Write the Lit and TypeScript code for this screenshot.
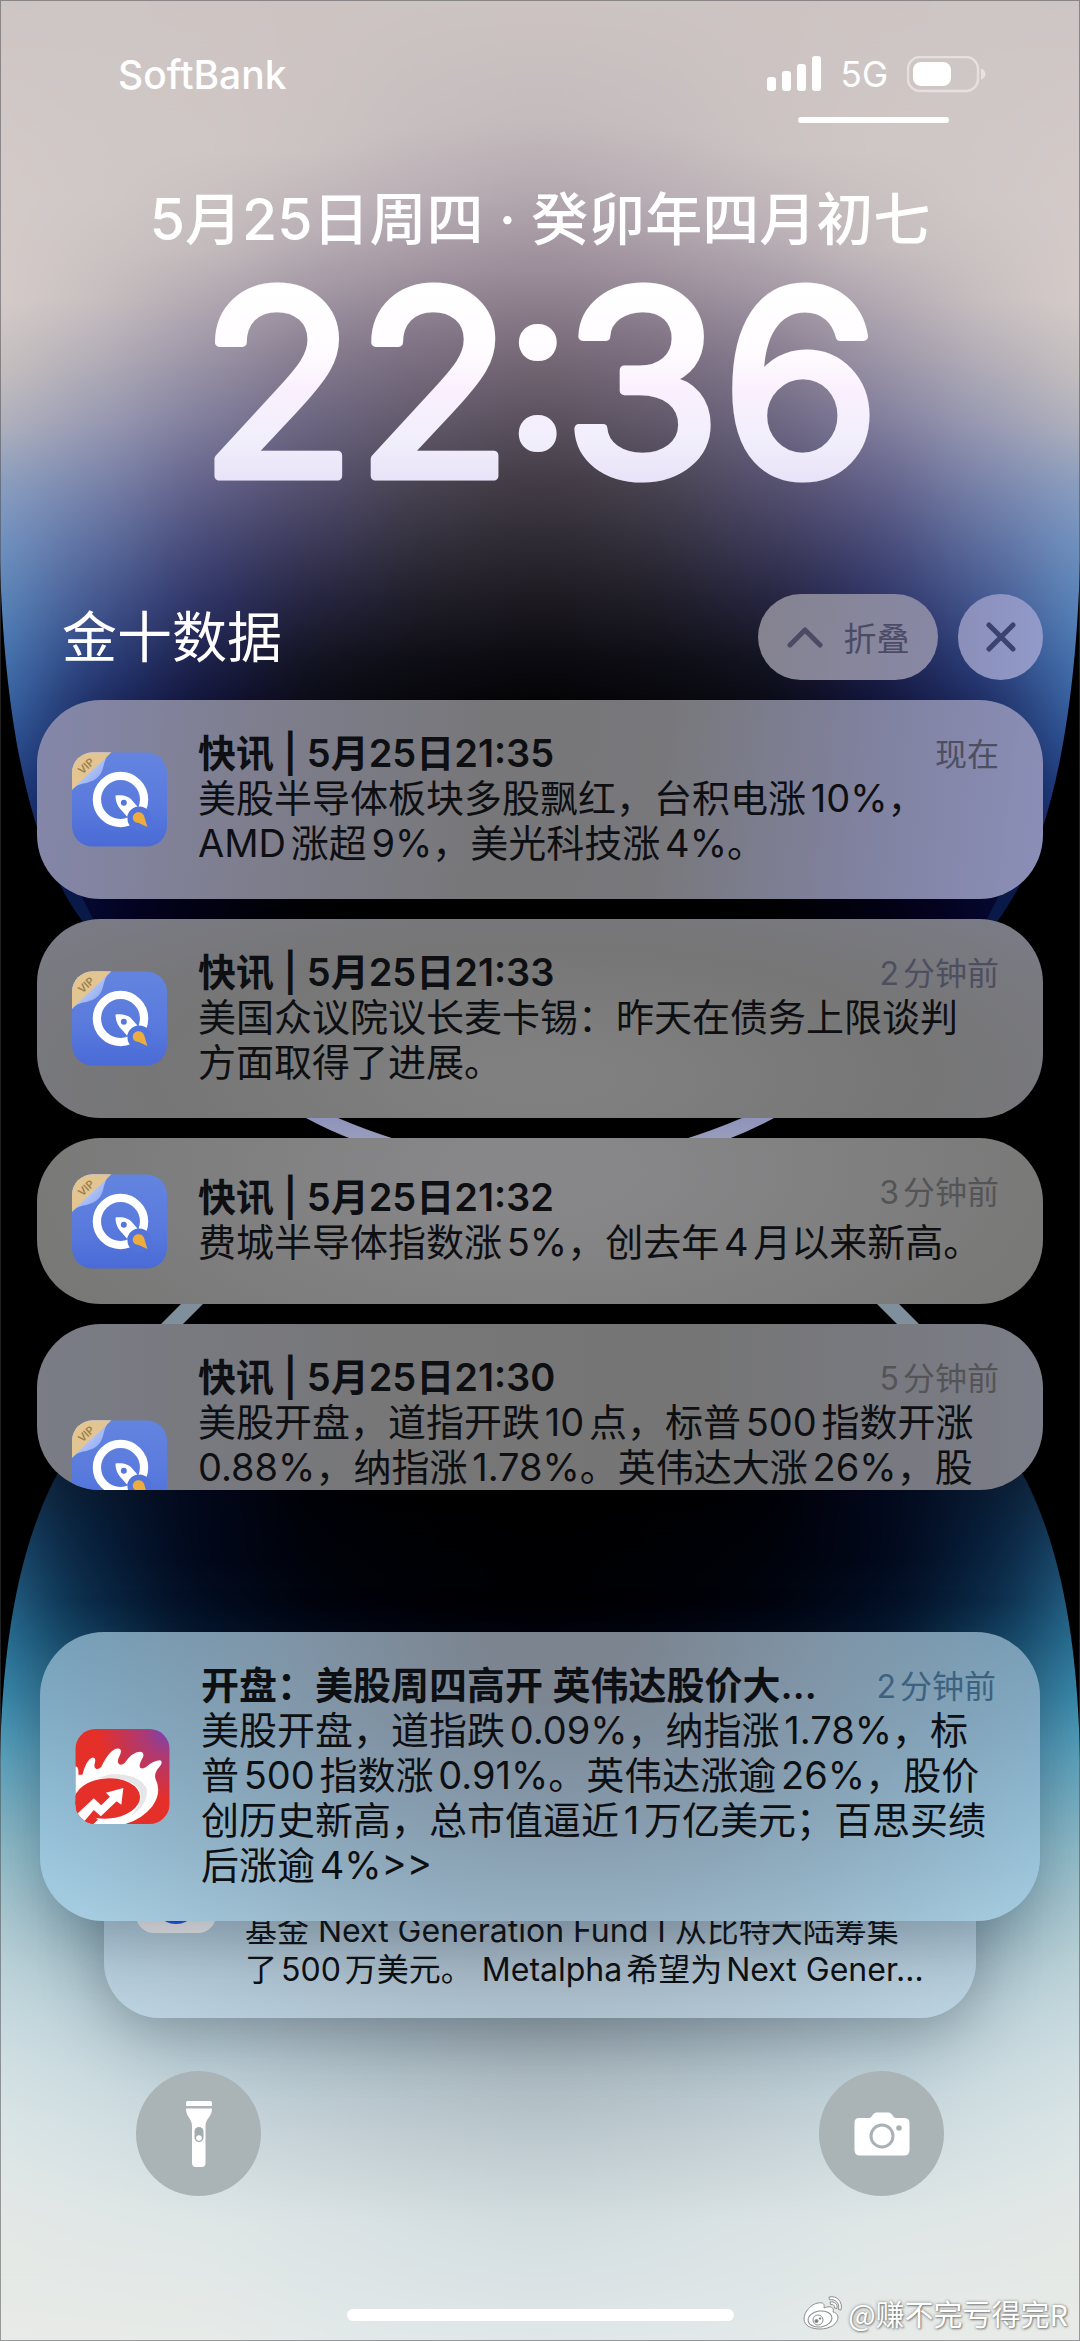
import { LitElement, html, css, svg, nothing } from "lit";
import { customElement, property } from "lit/decorators.js";

interface Notice {
  title: string;
  time: string;
  lines: string[];
  tone: string;
}

const NOTICES: Notice[] = [
  {
    title: "快讯 | 5月25日21:35",
    time: "现在",
    lines: ["美股半导体板块多股飘红，台积电涨10%，", "AMD涨超9%，美光科技涨4%。"],
    tone: "indigo",
  },
  {
    title: "快讯 | 5月25日21:33",
    time: "2分钟前",
    lines: ["美国众议院议长麦卡锡：昨天在债务上限谈判", "方面取得了进展。"],
    tone: "slate",
  },
  {
    title: "快讯 | 5月25日21:32",
    time: "3分钟前",
    lines: ["费城半导体指数涨5%，创去年4月以来新高。"],
    tone: "grey",
  },
  {
    title: "快讯 | 5月25日21:30",
    time: "5分钟前",
    lines: [
      "美股开盘，道指开跌10点，标普500指数开涨",
      "0.88%，纳指涨1.78%。英伟达大涨26%，股",
    ],
    tone: "steel clipped",
  },
];

const HEADLINE: Notice = {
  title: "开盘：美股周四高开 英伟达股价大…",
  time: "2分钟前",
  lines: [
    "美股开盘，道指跌0.09%，纳指涨1.78%，标",
    "普500指数涨0.91%。英伟达涨逾26%，股价",
    "创历史新高，总市值逼近1万亿美元；百思买绩",
    "后涨逾4%>>",
  ],
  tone: "sky",
};

const broken = (lines: string[]) =>
  lines.map((line, i) => html`${i ? html`<br />` : nothing}${line}`);

const rocketIcon = html`
  <svg class="icon" viewBox="33 37 286 284" aria-hidden="true">
    <defs>
      <linearGradient id="rk" x1="0" y1="0" x2="0" y2="1">
        <stop offset="0" stop-color="#6384df" />
        <stop offset=".55" stop-color="#5a7bdd" />
        <stop offset="1" stop-color="#4a6ad6" />
      </linearGradient>
      <linearGradient id="curl" x1="0" y1="0" x2="1" y2="1">
        <stop offset=".4" stop-color="#b9caf8" />
        <stop offset="1" stop-color="#6d90ee" />
      </linearGradient>
      <clipPath id="tile"><rect x="33" y="37" width="286" height="284" rx="62" /></clipPath>
    </defs>
    <g clip-path="url(#tile)">
      <rect x="33" y="37" width="286" height="284" fill="url(#rk)" />
      <path d="M158 30C128 50 132 74 122 96C112 120 84 128 66 131C50 134 40 142 30 154V30Z" fill="url(#curl)" />
      <path d="M152 37L33 149V37Z" fill="#e2c591" />
      <circle cx="179" cy="179" r="71" fill="none" stroke="#fff" stroke-width="25" />
      <circle cx="236" cy="236" r="36" fill="#5273da" />
      <path d="M164 167C184 164 206 169 216 184L230 200C214 203 203 214 199 231L186 216C172 203 164 187 164 167Z" fill="#fff" />
      <circle cx="189" cy="189" r="9" fill="#5676db" />
      <path d="M216 234C216 214 247 210 251 232L260 262L234 250C223 249 216 243 216 234Z" fill="#edad3e" />
      <text x="76" y="89" transform="rotate(-43 76 79)" text-anchor="middle" class="vip">VIP</text>
    </g>
  </svg>
`;

const eyeIcon = html`
  <svg class="icon" viewBox="45 57 281 283" aria-hidden="true">
    <defs>
      <radialGradient id="sn" cx="1" cy="0" r=".75">
        <stop offset="0" stop-color="#7245b8" />
        <stop offset=".35" stop-color="#a93a78" />
        <stop offset="1" stop-color="#e52f29" />
      </radialGradient>
      <clipPath id="tile2"><rect x="45" y="57" width="281" height="283" rx="60" /></clipPath>
    </defs>
    <g clip-path="url(#tile2)">
      <rect x="45" y="57" width="281" height="283" fill="url(#sn)" />
      <path
        d="M45 168Q56 168 54 193H66Q78 148 96 142Q108 143 103 158Q99 174 108 176Q114 178 122 170Q148 116 172 115Q185 116 179 132Q166 155 176 162Q183 166 192 158Q214 126 238 125Q252 127 246 142Q232 167 239 173Q246 177 256 170Q278 150 298 150Q307 155 297 168Q278 188 284 206Q304 246 274 288Q240 330 186 342H96L112 327L45 270Z"
        fill="#fff"
      />
      <path d="M150 192Q236 188 258 236Q262 284 210 316Q250 276 236 240Q216 200 110 203Z" fill="#e6e6e8" />
      <ellipse cx="140" cy="264" rx="98" ry="60" fill="#e52f29" transform="rotate(-4 140 264)" />
      <path d="M40 290L112 326Q96 342 96 342H40Z" fill="#e52f29" />
      <path d="M50 310L100 263L122 284L148 259L136 247L188 233L182 283L168 272L121 317L100 298L70 334Z" fill="#fff" />
    </g>
  </svg>
`;

/* Each band is a vertical colour ramp; a sideways blur melts them together. */
type Ramp = [number, string][];
interface Band {
  left: number;
  width: number;
  ramp: Ramp;
}

const UPPER: Band[] = [
  {
    left: -160,
    width: 200,
    ramp: [[0, "#cdc5c3"], [150, "#d3cac8"], [300, "#d6cdca"], [370, "#c8c1c0"], [430, "#b0b3be"], [480, "#8fa3c2"], [540, "#7497c4"], [620, "#5788be"], [700, "#3f70b0"], [780, "#274b90"], [860, "#153172"], [930, "#0a1a4c"]],
  },
  {
    left: 40,
    width: 110,
    ramp: [[0, "#cec6c4"], [200, "#d0c8c6"], [300, "#c8bfc0"], [360, "#b3aeb8"], [420, "#9a9cb4"], [480, "#7c86ac"], [540, "#5f70a0"], [600, "#455890"], [660, "#2b3f7c"], [700, "#1f2e66"], [780, "#121c50"], [900, "#04052a"]],
  },
  {
    left: 150,
    width: 110,
    ramp: [[0, "#cec5c3"], [150, "#cfc7c5"], [250, "#c4bbbd"], [300, "#b2a8b2"], [360, "#9a93a6"], [420, "#807d9c"], [480, "#64628a"], [540, "#484a78"], [600, "#2f3366"], [660, "#1c2048"], [700, "#12143a"], [800, "#050620"], [920, "#010010"]],
  },
  {
    left: 260,
    width: 115,
    ramp: [[0, "#cdc4c2"], [150, "#cbc2c2"], [230, "#bab0b6"], [290, "#a398a4"], [350, "#887d90"], [420, "#6c6580"], [480, "#55506e"], [540, "#3d3a58"], [600, "#25243e"], [660, "#12131f"], [720, "#07070f"], [920, "#000000"]],
  },
  {
    left: 375,
    width: 110,
    ramp: [[0, "#ccc4c2"], [130, "#c6bdbf"], [200, "#b8adb4"], [270, "#a0939f"], [340, "#807385"], [420, "#615869"], [480, "#49434f"], [540, "#33303c"], [600, "#1f1d26"], [660, "#0e0d15"], [720, "#040407"], [920, "#000000"]],
  },
  {
    left: 485,
    width: 56,
    ramp: [[0, "#ccc3c1"], [120, "#c4bbbd"], [190, "#b4a8af"], [270, "#9a8c98"], [340, "#7c6e7b"], [420, "#5a505c"], [480, "#423b45"], [540, "#2e2a33"], [600, "#1c1921"], [660, "#0b0a10"], [720, "#000000"]],
  },
];

const LOWER: Band[] = [
  {
    left: -160,
    width: 190,
    ramp: [[1480, "#1b3a58"], [1540, "#22567a"], [1600, "#2b7096"], [1650, "#3383a8"], [1700, "#3c93b5"], [1760, "#5fa8c0"], [1820, "#82b6c6"], [1880, "#a0c4ce"], [1950, "#b8d0d6"], [2000, "#c5d9de"], [2060, "#d1e0e3"], [2120, "#dbe5e6"], [2200, "#e3e8e6"], [2341, "#e8ebe7"]],
  },
  {
    left: 30,
    width: 110,
    ramp: [[1480, "#081a30"], [1540, "#07203c"], [1600, "#0a2a48"], [1640, "#12405f"], [1740, "#4a87a6"], [1850, "#86b2c2"], [1950, "#a8c3cd"], [2020, "#bed2d9"], [2060, "#c8d9de"], [2120, "#d3e0e3"], [2200, "#dfe6e6"], [2341, "#e8ebe7"]],
  },
  {
    left: 140,
    width: 120,
    ramp: [[1480, "#02071a"], [1560, "#01071a"], [1640, "#04132a"], [1900, "#8aa8b6"], [2030, "#b1c6d0"], [2080, "#bed0d8"], [2140, "#cddade"], [2220, "#dee6e6"], [2341, "#e7ebe8"]],
  },
  {
    left: 260,
    width: 115,
    ramp: [[1480, "#000004"], [1600, "#00030c"], [1640, "#020716"], [1900, "#8096a4"], [2030, "#a6b8c2"], [2080, "#b6c6ce"], [2140, "#c6d2d7"], [2220, "#dae2e4"], [2341, "#e3e9e9"]],
  },
  {
    left: 375,
    width: 110,
    ramp: [[1480, "#000000"], [1600, "#000106"], [1640, "#00030c"], [1900, "#74858f"], [2030, "#9dadb7"], [2080, "#b0bfc6"], [2140, "#c0ccd1"], [2220, "#d5dfe1"], [2341, "#e1e8e9"]],
  },
  {
    left: 485,
    width: 56,
    ramp: [[1480, "#000000"], [1600, "#000003"], [1640, "#000208"], [1900, "#6c7c86"], [2030, "#99a8b1"], [2080, "#acbac1"], [2140, "#bcc9ce"], [2220, "#d2dcdf"], [2341, "#e0e7e8"]],
  },
];

const rampDefs = (name: string, bands: Band[], from: number, to: number) =>
  bands.map(
    (b, i) => svg`
      <linearGradient id="${name}${i}" gradientUnits="userSpaceOnUse" x1="0" y1="${from}" x2="0" y2="${to}">
        ${b.ramp.map(([y, c]) => svg`<stop offset="${(y - from) / (to - from)}" stop-color="${c}" />`)}
      </linearGradient>`,
  );

const bandRects = (name: string, bands: Band[], from: number, to: number) =>
  bands.map(
    (b, i) => svg`
      <rect x="${b.left}" y="${from}" width="${b.width}" height="${to - from}" fill="url(#${name}${i})" />
      <rect x="${1080 - b.left - b.width}" y="${from}" width="${b.width}" height="${to - from}" fill="url(#${name}${i})" />`,
  );

@customElement("lock-wallpaper")
class LockWallpaper extends LitElement {
  static styles = css`
    :host {
      display: block;
      background: #000;
    }
    .art {
      display: block;
      width: 100%;
      height: 100%;
    }
  `;

  render() {
    return html`
      <svg class="art" viewBox="0 0 1080 2341" preserveAspectRatio="none" aria-hidden="true">
        <defs>
          ${rampDefs("u", UPPER, 0, 960)} ${rampDefs("l", LOWER, 1440, 2341)}
          <filter
            id="melt"
            filterUnits="userSpaceOnUse"
            x="-160"
            y="0"
            width="1400"
            height="2341"
            color-interpolation-filters="sRGB"
          >
            <feGaussianBlur stdDeviation="42 0" />
          </filter>
          <linearGradient id="rim" x1="0" y1="0" x2="0" y2="1">
            <stop offset="0" stop-color="#8f93bb" />
            <stop offset="1" stop-color="#999dbb" />
          </linearGradient>
          <clipPath id="upLobe">
            <path d="M0 0H1080V560C1076 720 1050 850 999 919L984 940H96L81 919C30 850 4 720 0 560Z" />
          </clipPath>
          <clipPath id="lowLobe">
            <path d="M0 2341V1760C2 1660 14 1560 54 1480L80 1440H1000L1026 1480C1066 1560 1078 1660 1080 1760V2341Z" />
          </clipPath>
        </defs>
        <rect width="1080" height="2341" fill="#000" />
        <g clip-path="url(#upLobe)">
          <g filter="url(#melt)">${bandRects("u", UPPER, 0, 960)}</g>
          <path d="M60 880L90 940M1020 880L990 940" stroke="#0a1a48" stroke-width="24" />
        </g>
        <g clip-path="url(#lowLobe)">
          <g filter="url(#melt)">${bandRects("l", LOWER, 1440, 2341)}</g>
        </g>
        <path d="M306 1118Q328 1130 354 1140H398Q366 1130 338 1118Z" fill="url(#rim)" />
        <path d="M774 1118Q752 1130 726 1140H682Q714 1130 742 1118Z" fill="url(#rim)" />
        <path d="M181 1304L159 1326H181L203 1304Z" fill="#7f8f9c" />
        <path d="M899 1304L921 1326H899L877 1304Z" fill="#7f8f9c" />
      </svg>
    `;
  }
}

@customElement("notice-card")
class NoticeCard extends LitElement {
  @property({ attribute: false }) notice!: Notice;
  @property({ attribute: false }) icon: unknown = nothing;

  static styles = css`
    :host {
      display: block;
      position: relative;
      z-index: 1;
    }
    .card {
      display: grid;
      grid-template-columns: 95px 1fr auto;
      column-gap: 31px;
      align-items: center;
      min-height: 166px;
      box-sizing: border-box;
      padding: 0 44px 0 35px;
      border-radius: 64px;
      color: #0e0f12;
    }
    .icon {
      display: block;
      grid-area: 1 / 1;
      width: 95px;
      height: 95px;
    }
    .vip {
      font: 600 32px Inter, sans-serif;
      fill: #9c7f4c;
    }
    .copy {
      grid-area: 1 / 2 / 2 / 4;
      padding: 31px 0 33px;
      white-space: nowrap;
      min-width: 0;
    }
    .title,
    .body {
      margin: 0;
      font-size: 38px;
      line-height: 45px;
      font-weight: 400;
    }
    .title {
      font-weight: 600;
      text-autospace: no-autospace;
    }
    .time {
      grid-area: 1 / 3;
      align-self: start;
      padding-top: 32px;
      font-size: 32px;
      line-height: 45px;
      color: #4d4e60;
    }
    .indigo {
      background: linear-gradient(97deg, #8587ab, #7e7e8e 22%, #777779 45%, #78787c 62%, #8082a0 82%, #8b8fb8);
    }
    .slate {
      background: radial-gradient(70% 120% at 50% 80%, #808080 10%, #767676 55%, #7b7c88 100%);
    }
    .grey {
      background: radial-gradient(60% 160% at 50% 20%, #878789 15%, #7c7c7c 70%, #767674 100%);
    }
    .grey .time,
    .steel .time {
      color: #545457;
    }
    .steel {
      background: linear-gradient(90deg, #7a7c86, #777778 35%, #757575 65%, #7b7d88);
    }
    .clipped {
      height: 165px;
      align-items: start;
      overflow: hidden;
    }
    .clipped .icon {
      margin-top: 96px;
    }
    .sky {
      background: radial-gradient(62% 150% at 52% 0, #7c8490 12%, rgba(130, 143, 158, 0.75) 45%, transparent 100%),
        linear-gradient(#73a6c3, #8fc0da 55%, #a6cce0);
      box-shadow: 0 20px 60px rgba(20, 40, 55, 0.3);
    }
    .sky .time {
      color: #3c6280;
    }
  `;

  render() {
    const n = this.notice;
    return html`
      <article class="card ${n.tone}">
        ${this.icon}
        <div class="copy">
          <h3 class="title">${n.title}</h3>
          <p class="body">${broken(n.lines)}</p>
        </div>
        <time class="time">${n.time}</time>
      </article>
    `;
  }
}

@customElement("app-root")
class AppRoot extends LitElement {
  static styles = css`
    :host {
      display: block;
      position: relative;
      min-height: 100vh;
      overflow: hidden;
      font-family: Inter, "Noto Sans CJK SC", sans-serif;
      text-autospace: normal;
      color: #fff;
    }
    .wallpaper {
      position: absolute;
      inset: 0;
    }
    .edge {
      position: absolute;
      inset: 0;
      z-index: 3;
      box-shadow: inset 0 0 0 1px rgba(70, 70, 76, 0.5);
      pointer-events: none;
    }
    .screen {
      position: relative;
      display: flex;
      flex-direction: column;
      min-height: 100vh;
      box-sizing: border-box;
      padding: 50px 37px 20px;
    }
    .status {
      display: flex;
      align-items: center;
      justify-content: space-between;
      height: 48px;
      padding: 0 57px 0 81px;
      font-size: 39px;
      font-weight: 500;
    }
    .radio {
      display: flex;
      align-items: center;
      gap: 19px;
      font-size: 35px;
      font-weight: 400;
    }
    .bars {
      width: 55px;
      height: 36px;
    }
    .battery {
      width: 79px;
      height: 37px;
    }
    .control-hint {
      align-self: flex-end;
      width: 151px;
      height: 6px;
      margin: 19px 94px 0 0;
      border-radius: 3px;
      background: #fff;
    }
    .date {
      margin: 57px 0 0;
      text-align: center;
      text-autospace: no-autospace;
      font-size: 57px;
      line-height: 80px;
      font-weight: 500;
      white-space: nowrap;
    }
    .clock {
      display: block;
      align-self: center;
      width: 720px;
      height: 230px;
      margin-top: 15px;
      overflow: visible;
    }
    .digits {
      font: 400 256px Inter, sans-serif;
      fill: url(#glow);
      stroke: url(#glow);
      stroke-width: 9px;
      stroke-linejoin: round;
    }
    .colon {
      font: 400 212px Roboto, sans-serif;
      stroke-width: 14px;
    }
    .header {
      display: flex;
      align-items: center;
      gap: 20px;
      margin-top: 89px;
      padding-left: 25px;
    }
    .source {
      flex: 1;
      margin: 0;
      font-size: 55px;
      line-height: 80px;
      font-weight: 400;
    }
    .pill {
      display: flex;
      align-items: center;
      justify-content: center;
      height: 86px;
      padding: 0;
      border: 0;
      border-radius: 43px;
      font: inherit;
      font-size: 33px;
      color: #4b4b66;
    }
    .fold {
      width: 180px;
      gap: 21px;
      background: linear-gradient(100deg, #85838f, #8888a6);
    }
    .close {
      width: 85px;
      background: linear-gradient(90deg, #8b8fb9, #919aca);
      color: #3c4270;
    }
    .chevron {
      width: 36px;
      height: 22px;
    }
    .cross {
      width: 30px;
      height: 30px;
    }
    .list {
      display: flex;
      flex-direction: column;
      gap: 20px;
      margin-top: 20px;
    }
    .stack {
      margin: 142px 3px 0;
    }
    .behind {
      display: grid;
      grid-template-columns: 80px 1fr;
      column-gap: 29px;
      align-items: center;
      height: 250px;
      box-sizing: border-box;
      margin: -153px 64px 0;
      padding: 0 32px;
      border-radius: 56px;
      background: radial-gradient(60% 100% at 50% 50%, #9dabb8, transparent), linear-gradient(#a9c8da, #bdd5e3);
      box-shadow: 0 14px 60px rgba(40, 52, 62, 0.34);
      color: #0e0f12;
    }
    .behind-icon {
      width: 80px;
      height: 80px;
    }
    .behind-text {
      align-self: end;
      margin: 0 0 29px;
      font-size: 32px;
      line-height: 39px;
      white-space: nowrap;
    }
    .tools {
      display: flex;
      justify-content: space-between;
      margin-top: 53px;
      padding: 0 99px;
    }
    .tool {
      display: flex;
      align-items: center;
      justify-content: center;
      width: 125px;
      height: 125px;
      padding: 0;
      border: 0;
      border-radius: 50%;
      background: #aab4b6;
    }
    .torch {
      width: 26px;
      height: 66px;
    }
    .camera {
      width: 56px;
      height: 44px;
    }
    .home {
      align-self: center;
      width: 387px;
      height: 12px;
      margin-top: auto;
      border-radius: 6px;
      background: #fff;
    }
    .watermark {
      position: absolute;
      right: 12px;
      bottom: 10px;
      z-index: 2;
      display: flex;
      align-items: center;
      gap: 5px;
      font-size: 29px;
      line-height: 36px;
      font-family: "Noto Sans CJK SC", sans-serif;
      text-autospace: no-autospace;
      text-shadow: 0 0 3px rgba(60, 60, 60, 0.6), 1px 1px 2px rgba(60, 60, 60, 0.5);
    }
    .eye {
      width: 40px;
      height: 34px;
    }
  `;

  render() {
    return html`
      <lock-wallpaper class="wallpaper"></lock-wallpaper>
      <main class="screen">
        <div class="status">
          <span>SoftBank</span>
          <span class="radio">
            <svg class="bars" viewBox="0 0 55 36" fill="#fff" aria-hidden="true">
              <rect x="0" y="21" width="9" height="14" rx="3" />
              <rect x="15" y="15" width="9" height="20" rx="3" />
              <rect x="30" y="8" width="9" height="27" rx="3" />
              <rect x="45" y="0" width="9" height="35" rx="3" />
            </svg>
            <span>5G</span>
            <svg class="battery" viewBox="0 0 79 37" aria-hidden="true">
              <rect x="1" y="1" width="70" height="34" rx="12" fill="none" stroke="#fff" stroke-opacity=".45" stroke-width="2.5" />
              <rect x="6" y="6" width="38" height="24" rx="8" fill="#fff" />
              <path d="M74 12.5C80 15 80 21 74 23.500Z" fill="#fff" fill-opacity=".5" />
            </svg>
          </span>
        </div>
        <div class="control-hint"></div>

        <p class="date">5月25日周四 · 癸卯年四月初七</p>
        <svg class="clock" viewBox="0 0 720 230" role="img" aria-label="22:36">
          <defs>
            <linearGradient id="glow" gradientUnits="userSpaceOnUse" x1="0" y1="16" x2="0" y2="216">
              <stop offset="0" stop-color="#fff" />
              <stop offset=".3" stop-color="#fffcff" />
              <stop offset=".5" stop-color="#faf0fd" />
              <stop offset=".75" stop-color="#f1eefc" />
              <stop offset="1" stop-color="#e6e0f6" />
            </linearGradient>
          </defs>
          <text class="digits" x="360" y="201" text-anchor="middle">22<tspan class="colon" dy="-32">:</tspan><tspan dy="32">36</tspan></text>
        </svg>

        <header class="header">
          <h2 class="source">金十数据</h2>
          <button class="pill fold">
            <svg class="chevron" viewBox="0 0 36 22" fill="none" stroke="currentColor" stroke-width="5" stroke-linecap="round" stroke-linejoin="round" aria-hidden="true">
              <path d="M3 19L18 4L33 19" />
            </svg>
            折叠
          </button>
          <button class="pill close" aria-label="关闭">
            <svg class="cross" viewBox="0 0 30 30" fill="none" stroke="currentColor" stroke-width="5" stroke-linecap="round" aria-hidden="true">
              <path d="M3 3L27 27M27 3L3 27" />
            </svg>
          </button>
        </header>

        <section class="list">
          ${NOTICES.map((n) => html`<notice-card .notice=${n} .icon=${rocketIcon}></notice-card>`)}
        </section>

        <section class="stack">
          <notice-card .notice=${HEADLINE} .icon=${eyeIcon}></notice-card>
          <article class="behind">
            <svg class="behind-icon" viewBox="0 0 80 80" aria-hidden="true">
              <rect width="80" height="80" rx="18" fill="#eceaec" />
              <ellipse cx="40" cy="40" rx="26" ry="31" fill="#1f4fe0" />
            </svg>
            <p class="behind-text">
              基金 Next Generation Fund I 从比特大陆筹集<br />了500万美元。 Metalpha希望为Next Gener…
            </p>
          </article>
        </section>

        <nav class="tools">
          <button class="tool" aria-label="手电筒">
            <svg class="torch" viewBox="0 0 26 66" aria-hidden="true">
              <path d="M0 1.500Q0 0 1.500 0H24.500Q26 0 26 1.500V5H0Z" fill="#fff" />
              <path d="M0 7.500H26C26 16 20 17 19.500 24V62Q19.500 66 15.500 66H10Q6 66 6 62V24C5.500 17 0 16 0 7.500Z" fill="#fff" />
              <rect x="8.500" y="26" width="9" height="15" rx="4.500" fill="#a2acaf" />
              <circle cx="13" cy="37" r="2.800" fill="#fff" />
            </svg>
          </button>
          <button class="tool" aria-label="相机">
            <svg class="camera" viewBox="0 0 56 44" aria-hidden="true">
              <path d="M5 6H15Q17 6 18 4Q20 .500 22.500 .500H34.500Q37 .500 39 4Q40 6 42 6H50Q55.500 6 55.500 11V38Q55.500 43.500 50 43.500H6Q.500 43.500 .500 38V11Q.500 6 5 6Z" fill="#fff" />
              <circle cx="28" cy="24" r="11" fill="none" stroke="#a8b2b4" stroke-width="3" />
              <circle cx="45" cy="16" r="2.800" fill="#a8b2b4" />
            </svg>
          </button>
        </nav>
        <div class="home"></div>
      </main>

      <div class="watermark">
        <svg class="eye" viewBox="0 0 40 34" fill="#fff" stroke="#8b8f90" stroke-width="1" aria-hidden="true">
          <path d="M15 7C8 8 1 16 1 23C1 30 9 33 17 33C27 33 35 28 35 21C35 18 32 16.500 30 16C31 13 30 10 24 11C23.500 11 21 12 21 12C22 8 20 6 15 7Z" />
          <ellipse cx="17" cy="23" rx="12" ry="8" transform="rotate(-8 17 23)" />
          <circle cx="15" cy="24" r="5" />
          <circle cx="13.500" cy="25" r="1.600" fill="#777" />
          <circle cx="17" cy="22.500" r=".8" fill="#777" />
          <path d="M26 1C34-1 40 6 38 14L35.500 13.500C37 7 32 2.500 26.500 3.800Z" />
          <path d="M27 6C31 5 35 8 34 12.500L31.500 12C32 9.500 30 8 27.500 8.500Z" />
        </svg>
        <span>@赚不完亏得完R</span>
      </div>
      <div class="edge"></div>
    `;
  }
}
